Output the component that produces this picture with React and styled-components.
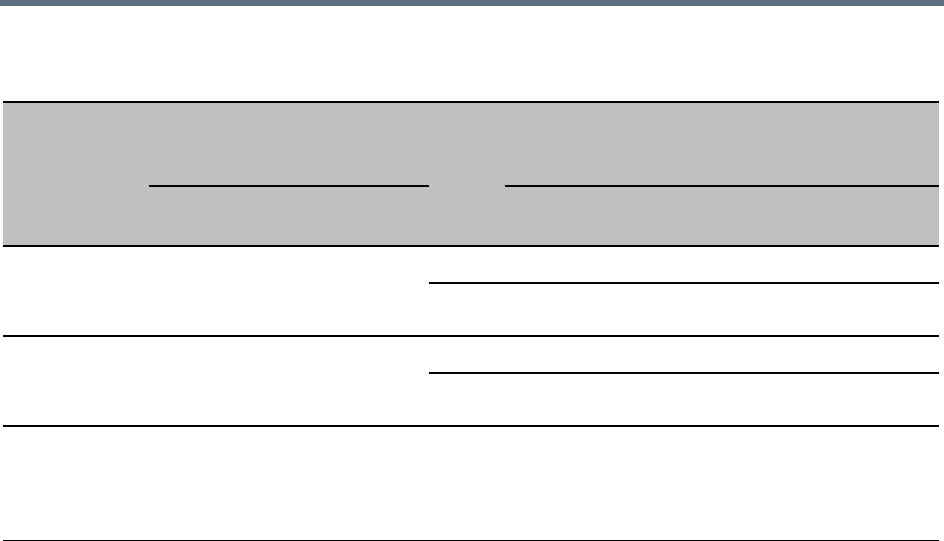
import styled, { createGlobalStyle } from "styled-components";

const GlobalStyle = createGlobalStyle`
  html, body {
    margin: 0;
    padding: 0;
    background: #fff;
    font-family: "Liberation Sans", Arial, sans-serif;
  }
`;

const Page = styled.div`
  width: 944px;
  height: 541px;
  overflow: hidden;
  background: #fff;
`;

const TopBar = styled.div`
  height: 6px;
  background: #607080;
`;

const Table = styled.div`
  margin: 95px 0 0 3px;
  width: 936px;
  border-top: 2px solid #000;
`;

const Header = styled.div`
  display: grid;
  grid-template-columns: 146px 280px 76px 434px;
  grid-template-rows: 84px 58px;
  background: #c0c0c0;
  border-bottom: 2px solid #000;
`;

const HeadCell = styled.div`
  grid-column: ${(p) => p.$col};
  grid-row: ${(p) => p.$row};
  border-bottom: ${(p) => (p.$rule ? "2px solid #000" : "none")};
`;

const Row = styled.div`
  display: grid;
  grid-template-columns: 426px 510px;
  grid-template-rows: ${(p) => (p.$split ? "37px 51px" : `${p.$height}px`)};
  border-bottom: 2px solid #000;
`;

const Cell = styled.div`
  grid-column: ${(p) => p.$col};
  grid-row: ${(p) => p.$row || "auto"};
  border-bottom: ${(p) => (p.$rule ? "2px solid #000" : "none")};
`;

const SplitRow = () => (
  <Row $split>
    <Cell $col="1" $row="1 / 3" />
    <Cell $col="2" $row="1" $rule />
    <Cell $col="2" $row="2" />
  </Row>
);

const App = () => {
  return (
    <Page>
      <GlobalStyle />
      <TopBar />
      <Table>
        <Header>
          <HeadCell $col="1" $row="1 / 3" />
          <HeadCell $col="2" $row="1" $rule />
          <HeadCell $col="2" $row="2" />
          <HeadCell $col="3" $row="1 / 3" />
          <HeadCell $col="4" $row="1" $rule />
          <HeadCell $col="4" $row="2" />
        </Header>
        <SplitRow />
        <SplitRow />
        <Row $height={113}>
          <Cell $col="1 / 3" />
        </Row>
      </Table>
    </Page>
  );
};

export default App;
